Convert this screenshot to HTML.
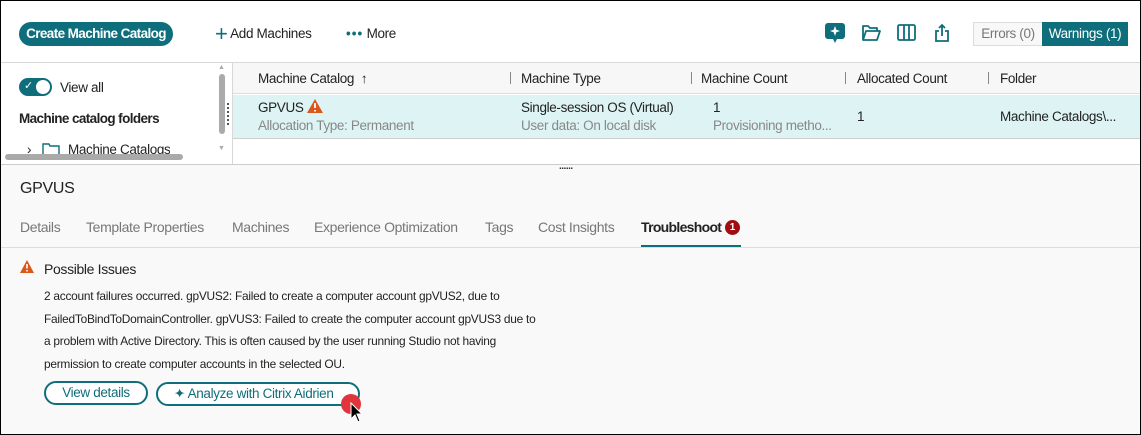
<!DOCTYPE html>
<html><head><style>
*{margin:0;padding:0;box-sizing:border-box}
body{width:1141px;height:435px;overflow:hidden;font-family:"Liberation Sans",sans-serif;color:#222;background:#fff;position:relative}
.a{position:absolute;white-space:nowrap}
.n{font-size:13.5px;letter-spacing:-0.35px}
.teal{color:#0f6e7b}
</style></head><body>
<div class="a" style="left:0;top:0;width:1141px;height:435px;border:1px solid #000;z-index:10;pointer-events:none"></div>
<div class="a" style="left:19px;top:22px;width:154px;height:24px;border-radius:12px;background:#0f6e7b;color:#fff;font-size:13.5px;font-weight:bold;letter-spacing:-0.6px;text-align:center;line-height:24px">Create Machine Catalog</div>
<div class="a n" style="left:215px;top:26px"><span class="teal" style="font-size:22px;position:relative;top:3px;line-height:10px">+</span> Add Machines</div>
<div class="a n" style="left:346px;top:26px"><span class="teal" style="font-weight:bold;letter-spacing:1px">•••</span> More</div>
<svg class="a" style="left:824px;top:22px" width="22" height="24" viewBox="0 0 22 24"><rect x="1" y="1" width="20" height="16" rx="3" fill="#0f6e7b"/><path d="M9 17l2 4 2-4z" fill="#0f6e7b"/><path d="M11 4l1.3 3.7L16 9l-3.7 1.3L11 14l-1.3-3.7L6 9l3.7-1.3z" fill="#fff"/></svg>
<svg class="a" style="left:861px;top:24px" width="20" height="18" viewBox="0 0 20 18"><path d="M2 16V2h5l2 2h7v3M2 16l3-9h14l-3 9z" fill="none" stroke="#0f6e7b" stroke-width="1.8" stroke-linejoin="round"/></svg>
<svg class="a" style="left:897px;top:24px" width="20" height="18" viewBox="0 0 20 18"><rect x="1" y="1" width="17" height="15" rx="1.5" fill="none" stroke="#0f6e7b" stroke-width="1.8"/><path d="M7 1v15M12 1v15" stroke="#0f6e7b" stroke-width="1.8"/></svg>
<svg class="a" style="left:934px;top:23px" width="16" height="20" viewBox="0 0 16 20"><path d="M5 8H2v10h12V8h-3M8 13V2M5 5l3-3 3 3" fill="none" stroke="#0f6e7b" stroke-width="1.8"/></svg>
<div class="a n" style="left:973px;top:22px;width:70px;height:24px;border:1px solid #ddd;background:#f8f8f8;color:#777;text-align:center;line-height:22px">Errors (0)</div>
<div class="a n" style="left:1042px;top:22px;width:86px;height:24px;background:#0f6e7b;color:#fff;text-align:center;line-height:24px">Warnings (1)</div>
<div class="a" style="left:0;top:62px;width:1141px;height:1px;background:#d8d8d8"></div>
<div class="a" style="left:19px;top:78px;width:33px;height:18px;border-radius:9px;background:#0f6e7b"></div>
<div class="a" style="left:36px;top:80px;width:14px;height:14px;border-radius:7px;background:#fff"></div>
<div class="a" style="left:24px;top:79px;color:#fff;font-size:11px">✓</div>
<div class="a n" style="left:60px;top:80px">View all</div>
<div class="a n" style="left:19px;top:111px;font-weight:bold;letter-spacing:-0.6px">Machine catalog folders</div>
<div class="a n" style="left:27px;top:142px">›</div>
<svg class="a" style="left:42px;top:143px" width="18" height="14"><path d="M1 13V1h6l1 2h9v10" fill="none" stroke="#0f6e7b" stroke-width="1.4"/></svg>
<div class="a n" style="left:68px;top:142px;height:14px;overflow:hidden">Machine Catalogs</div>
<div class="a" style="left:219px;top:74px;width:6px;height:60px;border-radius:3px;background:#aaa"></div>
<div class="a" style="left:218px;top:64px;font-size:7px;color:#aaa">▲</div>
<div class="a" style="left:218px;top:145px;font-size:7px;color:#aaa">▼</div>
<div class="a" style="left:5px;top:154px;width:178px;height:6px;border-radius:3px;background:#aaa"></div>
<div class="a" style="left:232px;top:63px;width:1px;height:102px;background:#d8d8d8"></div>
<div class="a" style="left:227px;top:103px;width:3px;height:22px;border-left:2px dotted #555"></div>
<div class="a" style="left:233px;top:63px;width:907px;height:31px;background:#f7f7f7;border-bottom:1px solid #ddd"></div>
<div class="a n" style="left:258px;top:71px">Machine Catalog &nbsp;↑</div>
<div class="a" style="left:510px;top:72px;width:1px;height:12px;background:#888"></div>
<div class="a n" style="left:521px;top:71px">Machine Type</div>
<div class="a" style="left:691px;top:72px;width:1px;height:12px;background:#888"></div>
<div class="a n" style="left:701px;top:71px">Machine Count</div>
<div class="a" style="left:845px;top:72px;width:1px;height:12px;background:#888"></div>
<div class="a n" style="left:857px;top:71px">Allocated Count</div>
<div class="a" style="left:988px;top:72px;width:1px;height:12px;background:#888"></div>
<div class="a n" style="left:1000px;top:71px">Folder</div>
<div class="a" style="left:233px;top:95px;width:907px;height:44px;background:#def4f4;border-bottom:1px solid #d0d0d0"></div>
<div class="a n" style="left:258px;top:100px">GPVUS</div>
<svg class="a" style="left:306px;top:98px" width="18" height="16"><path d="M9 1L17 15H1z" fill="#d9581a"/><path d="M9 5v5M9 12v1.5" stroke="#fff" stroke-width="1.8"/></svg>
<div class="a n" style="left:258px;top:118px;color:#888">Allocation Type: Permanent</div>
<div class="a n" style="left:521px;top:100px">Single-session OS (Virtual)</div>
<div class="a n" style="left:521px;top:118px;color:#888">User data: On local disk</div>
<div class="a n" style="left:713px;top:100px">1</div>
<div class="a n" style="left:713px;top:118px;color:#888">Provisioning metho...</div>
<div class="a n" style="left:857px;top:109px">1</div>
<div class="a n" style="left:1000px;top:109px">Machine Catalogs\...</div>
<div class="a" style="left:0;top:164px;width:1141px;height:271px;background:#f9f9f9;border-top:1px solid #ccc"></div>
<div class="a" style="left:559px;top:161px;font-size:10px;font-weight:bold;letter-spacing:-0.5px;color:#333">......</div>
<div class="a" style="left:20px;top:180px;font-size:16px;letter-spacing:-0.3px">GPVUS</div>
<div class="a n" style="left:20px;top:219px;color:#777;font-size:14px">Details</div>
<div class="a n" style="left:86px;top:219px;color:#777;font-size:14px">Template Properties</div>
<div class="a n" style="left:232px;top:219px;color:#777;font-size:14px">Machines</div>
<div class="a n" style="left:314px;top:219px;color:#777;font-size:14px">Experience Optimization</div>
<div class="a n" style="left:485px;top:219px;color:#777;font-size:14px">Tags</div>
<div class="a n" style="left:538px;top:219px;color:#777;font-size:14px">Cost Insights</div>
<div class="a n" style="left:641px;top:219px;font-weight:bold;letter-spacing:-0.7px;font-size:14px">Troubleshoot</div>
<div class="a" style="left:725px;top:220px;width:15px;height:15px;border-radius:8px;background:#a10e12;color:#fff;font-size:10px;font-weight:bold;text-align:center;line-height:15px">1</div>
<div class="a" style="left:641px;top:245px;width:100px;height:2px;background:#0f6e7b"></div>
<div class="a" style="left:0;top:247px;width:1141px;height:1px;background:#ddd"></div>
<svg class="a" style="left:19px;top:259px" width="16" height="15"><path d="M8 1L15 14H1z" fill="#d9581a"/><path d="M8 5v4.5M8 11v1.5" stroke="#fff" stroke-width="1.6"/></svg>
<div class="a n" style="left:44px;top:261px;font-size:14px">Possible Issues</div>
<div class="a" style="left:44px;top:285px;font-size:11.9px;line-height:22.5px;letter-spacing:-0.25px">2 account failures occurred. gpVUS2: Failed to create a computer account gpVUS2, due to<br>FailedToBindToDomainController. gpVUS3: Failed to create the computer account gpVUS3 due to<br>a problem with Active Directory. This is often caused by the user running Studio not having<br>permission to create computer accounts in the selected OU.</div>
<div class="a n teal" style="left:44px;top:381px;width:104px;height:24px;border:2px solid #0f6e7b;border-radius:12px;background:#fff;text-align:center;line-height:20px">View details</div>
<div class="a n teal" style="left:156px;top:382px;width:204px;height:24px;border:2px solid #0f6e7b;border-radius:12px;background:#fff;line-height:20px;padding-left:16px">✦ Analyze with Citrix Aidrien</div>
<div class="a" style="left:341px;top:394px;width:20px;height:20px;border-radius:10px;background:#e0353d"></div>
<svg class="a" style="left:350px;top:402px" width="14" height="22"><path d="M1 1v16l4-4 3 7 2-1-3-7h5z" fill="#000" stroke="#fff" stroke-width="1"/></svg>
</body></html>
